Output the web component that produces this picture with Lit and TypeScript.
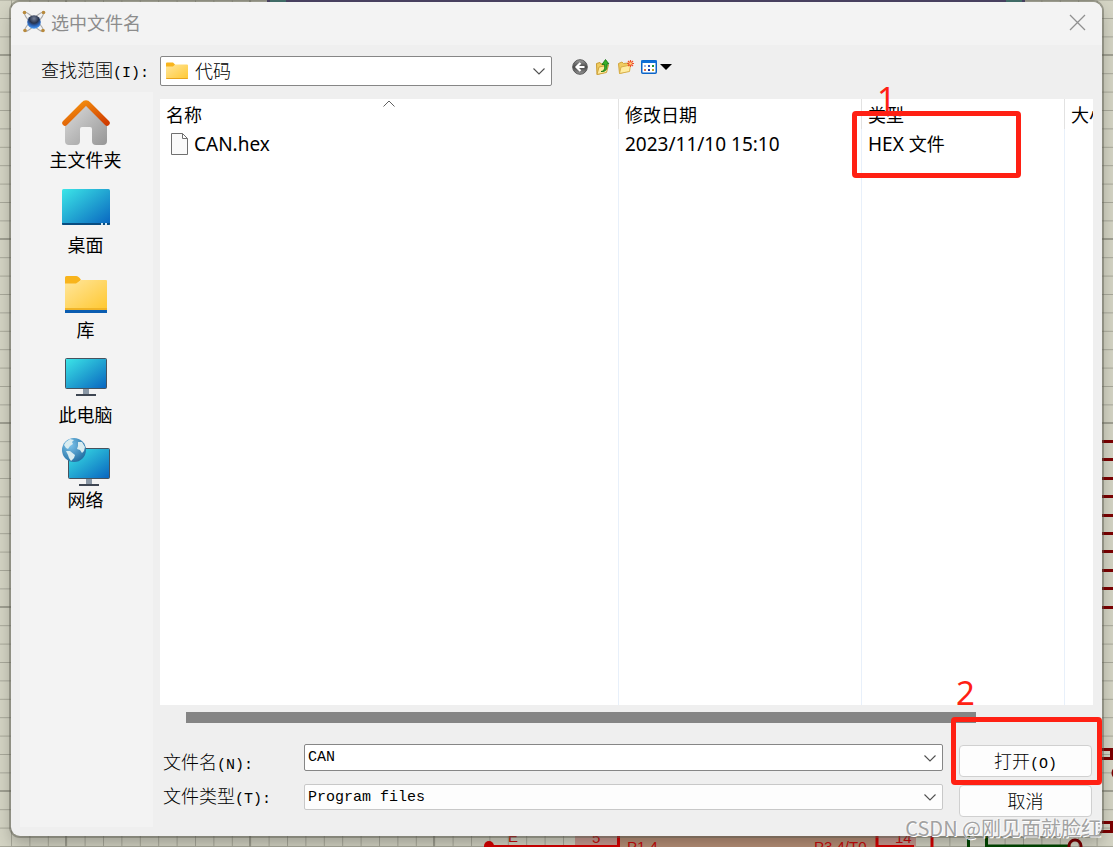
import { LitElement, html, css, svg } from "lit";
import { customElement, state } from "lit/decorators.js";

const CJK = css`"Noto Sans CJK SC", sans-serif`;

const range = (n: number) => Array.from({ length: n }, (_, i) => i);

/* Schematic sheet seen behind the dialog. */
@customElement("schematic-backdrop")
export class SchematicBackdrop extends LitElement {
  static styles = css`
    :host { display: block; }
    svg { display: block; width: 100%; height: 100%; }
    .net { font: 15px "Liberation Sans", sans-serif; fill: #c80a0a; }
  `;
  render() {
    return html`<svg aria-hidden="true">
      <defs>
        <pattern id="fine" width="18.4" height="18.4" x="11" y="18" patternUnits="userSpaceOnUse">
          <path d="M0 .5H18.4M.5 0V18.4" stroke="#a8a89a" stroke-width="1" />
        </pattern>
        <pattern id="bold" width="184" height="184" x="65" y="54" patternUnits="userSpaceOnUse">
          <path d="M0 1H184M1 0V184" stroke="#a0a092" stroke-width="2" />
        </pattern>
      </defs>
      <rect width="100%" height="100%" fill="#d4d4c4" />
      <rect width="100%" height="100%" fill="url(#fine)" />
      <rect width="100%" height="100%" fill="url(#bold)" />
      <rect x="267" y="0" width="758" height="2" fill="#3a2c70" />
      <rect x="270" y="0" width="16" height="2" fill="#2c7c7c" />
      <rect x="1006" y="0" width="16" height="2" fill="#2c7c7c" />
      ${range(10).map((i) => svg`<rect x="1102" y=${Math.round(440 + i * 18.4)} width="12" height="3" fill="#7c0000" />`)}
      <g fill="none" stroke="#7c0000" stroke-width="3">
        <path d="M1100 749.500H1111.500V758.500H1100M1100 822.500H1111.500V831.500H1100" />
        <circle cx="1118" cy="773" r="5" />
      </g>
      <rect x="575" y="830" width="43" height="17" fill="#c89c92" />
      <rect x="620" y="830" width="256" height="17" fill="#b89078" />
      <rect x="878" y="830" width="38" height="17" fill="#c89c92" />
      <path d="M489 846.500H618.500V830M877 830V846.500H914M932 830V847" fill="none" stroke="#d80000" stroke-width="3" />
      <circle cx="489" cy="846" r="5" fill="#d80000" />
      <path d="M968.500 830V847M986.500 830V846H1070" fill="none" stroke="#004800" stroke-width="3" />
      <circle cx="1075" cy="846" r="6" fill="none" stroke="#7c0000" stroke-width="3" />
      <text class="net" x="508" y="842">E</text>
      <text class="net" x="592" y="843">5</text>
      <text class="net" x="627" y="852">P1.4</text>
      <text class="net" x="814" y="852">P3.4/T0</text>
      <text class="net" x="895" y="843">14</text>
    </svg>`;
  }
}

const screen = svg`
  <linearGradient id="scr" x1="0" y1="0" x2="1" y2="1">
    <stop offset="0" stop-color="#3ce6e8" /><stop offset=".5" stop-color="#22a5d2" /><stop offset="1" stop-color="#0864c0" />
  </linearGradient>`;

const folderFill = svg`
  <linearGradient id="fold" x1="0" y1="0" x2="1" y2="1">
    <stop offset="0" stop-color="#ffe69c" /><stop offset="1" stop-color="#ffc832" />
  </linearGradient>`;

const placeIcons: Record<string, unknown> = {
  home: html`<svg width="48" height="48" viewBox="0 0 48 48">
    <defs>
      <linearGradient id="wall" x1="0" y1="0" x2="1" y2="1"><stop offset="0" stop-color="#dedede" /><stop offset="1" stop-color="#969696" /></linearGradient>
      <linearGradient id="roof" x1="0" y1="0" x2="1" y2="1"><stop offset="0" stop-color="#f89a10" /><stop offset="1" stop-color="#d03c00" /></linearGradient>
    </defs>
    <path d="M3 24 24 5 45 24V43a4 4 0 0 1-4 4H34a4 4 0 0 1-4-4V31a2 2 0 0 0-2-2H20a2 2 0 0 0-2 2V43a4 4 0 0 1-4 4H7a4 4 0 0 1-4-4Z" fill="url(#wall)" />
    <path d="M3 25 21.500 6.500Q24 3.500 26.500 6.500L45 25" fill="none" stroke="url(#roof)" stroke-width="5.500" stroke-linecap="round" stroke-linejoin="round" />
  </svg>`,
  desktop: html`<svg width="48" height="48" viewBox="0 0 48 48">
    <defs>${screen}</defs>
    <rect x="0" y="6" width="48" height="36" rx="1.500" fill="url(#scr)" />
    <path d="M0 40H48V41a1 1 0 0 1-1 1H1a1 1 0 0 1-1-1Z" fill="#084c80" />
    <path d="M39 40h2v2h-2zM43 40h2v2h-2z" fill="#cfe6f4" />
  </svg>`,
  library: html`<svg width="48" height="48" viewBox="0 0 48 48">
    <defs>${folderFill}</defs>
    <path d="M3 9.500A1.500 1.500 0 0 1 4.500 8H14c2 0 3 1 5 4L15 16H3Z" fill="#f8b41c" />
    <path d="M3 15.500H14L19 12H44a1 1 0 0 1 1 1V41H3Z" fill="url(#fold)" />
    <path d="M3 40H45V42H3Z" fill="#f0b428" />
    <path d="M3 42H45V45H3Z" fill="#0a5cb0" />
  </svg>`,
  pc: html`<svg width="48" height="48" viewBox="0 0 48 48">
    <defs>${screen}</defs>
    <path d="M21 36H27V42H21Z" fill="#8a97a5" />
    <rect x="14" y="41" width="20" height="2" fill="#3e4652" />
    <rect x="3.500" y="5.500" width="41" height="30" rx="1" fill="url(#scr)" stroke="#46525e" />
  </svg>`,
  network: html`<svg width="48" height="48" viewBox="0 0 48 48">
    <defs>${screen}
      <radialGradient id="sea" cx=".35" cy=".3" r=".8"><stop offset="0" stop-color="#7cc4ec" /><stop offset="1" stop-color="#1c689c" /></radialGradient>
    </defs>
    <path d="M24 40H30V46H24Z" fill="#8a97a5" />
    <rect x="17" y="46" width="20" height="2" fill="#3e4652" />
    <rect x="6.500" y="10.500" width="41" height="30" rx="1" fill="url(#scr)" stroke="#46525e" />
    <circle cx="12" cy="12" r="12" fill="url(#sea)" />
    <path d="M2 7Q4 3 8 1L12 2 10 4 11 6 8 8 6 11 4 10ZM4 13 8 13 13 17 12 20 9 23 7 20 6 17ZM16 4 20 4 23 9 22 13 20 15 18 12 15 11 16 8Z" fill="#d8ecf0" />
  </svg>`,
};

const places = [
  { icon: "home", label: "主文件夹" },
  { icon: "desktop", label: "桌面" },
  { icon: "library", label: "库" },
  { icon: "pc", label: "此电脑" },
  { icon: "network", label: "网络" },
];

@customElement("place-list")
export class PlaceList extends LitElement {
  static styles = css`
    :host { display: block; background: #f3f3f3; }
    nav { display: flex; flex-direction: column; gap: 11px; padding: 6px 2px 0 0; }
    button {
      display: flex; flex-direction: column; align-items: center;
      border: 0; padding: 0; background: none; color: #000;
      font: 18px/26px ${CJK};
    }
    svg { display: block; }
  `;
  render() {
    return html`<nav aria-label="位置">
      ${places.map((p) => html`<button type="button">${placeIcons[p.icon]}<span>${p.label}</span></button>`)}
    </nav>`;
  }
}

const chevron = html`<svg class="chevron" width="14" height="14" viewBox="0 0 14 14" aria-hidden="true">
  <path d="M1.500 4.500 7 10 12.500 4.500" fill="none" stroke="#505050" stroke-width="1.100" />
</svg>`;

@customElement("app-root")
export class AppRoot extends LitElement {
  @state() private fileName = "CAN";

  static styles = css`
    * { box-sizing: border-box; }
    :host {
      position: relative; display: flex; min-height: 100vh; overflow: hidden;
      padding: 2px 11px 11px; box-sizing: border-box;
      font: 300 18px/28px ${CJK}; color: #000;
    }
    schematic-backdrop { position: absolute; inset: 0; }
    .dialog {
      position: relative; flex: 1; min-width: 0; display: flex; flex-direction: column;
      background: #efefef; border-radius: 9px;
      box-shadow: 0 0 0 2px rgba(90, 90, 80, .45), 0 8px 16px rgba(0, 0, 0, .25);
    }
    .titlebar {
      display: flex; align-items: center; gap: 5px; height: 43px; padding: 0 16px 3px 11px;
      background: #f3f3f3; border-radius: 9px 9px 0 0;
    }
    h1 { flex: 1; margin: 0; font-size: 18px; line-height: 26px; font-weight: 400; color: #8c8c8c; }
    button { font: inherit; color: inherit; }
    .plain { display: block; border: 0; padding: 0; background: none; }
    .plain svg, .titlebar svg { display: block; }
    .toolbar { display: flex; align-items: center; padding: 11px 9px 6px 30px; }
    .toolbar > label { width: 119px; line-height: 26px; padding-bottom: 4px; }
    .mono { font-family: "Liberation Mono", monospace; font-size: 15px; line-height: 1; }
    .combo { display: grid; align-items: center; }
    .combo > * { grid-area: 1 / 1; }
    .lookin { flex: 0 1 392px; height: 30px; }
    .combo select, .combo input {
      appearance: none; width: 100%; height: 100%; min-width: 0; margin: 0; border-radius: 2px;
      border: 1px solid #868686; background: #fff; color: #000; outline: 0;
      font: 15px "Liberation Mono", monospace; padding: 0 30px 0 3px;
    }
    .lookin select { font: 300 18px ${CJK}; padding: 0 30px 2px 34px; }
    .combo .folder { z-index: 1; margin-left: 6px; pointer-events: none; }
    .chevron { z-index: 1; justify-self: end; margin-right: 6px; pointer-events: none; }
    .tools { display: flex; align-items: center; gap: 7px; margin: 0 0 8px 20px; }
    .view { display: flex; align-items: center; gap: 3px; }
    .main { flex: 1; display: flex; gap: 7px; padding: 0 9px 9px; }
    place-list { flex: 0 0 133px; }
    .content { flex: 1; min-width: 0; display: flex; flex-direction: column; padding-top: 7px; }
    .files { flex: 1; display: grid; background: #fff; }
    table { width: 100%; height: 100%; table-layout: fixed; border-collapse: separate; border-spacing: 0; }
    .date { width: 243px; } .type { width: 203px; } .size { width: 28px; }
    th, td {
      padding: 0 0 0 6px; text-align: left; font-weight: 400; white-space: nowrap;
      border-right: 1px solid #e8f0fa;
    }
    th { position: relative; height: 30px; border-color: #e2e2e2; }
    td { height: 28px; }
    .rest td { height: auto; }
    th:last-child, td:last-child { border-right: 0; overflow: hidden; }
    .latin { font-family: "Noto Sans", sans-serif; font-size: 19px; font-weight: 400; }
    .file { display: flex; align-items: center; gap: 6px; padding-left: 5px; }
    .sort { position: absolute; left: 50%; top: 1px; margin-left: -6px; }
    .track { padding: 7px 117px 7px 26px; }
    .thumb { height: 11px; background: #858585; }
    form { display: flex; gap: 16px; padding: 14px 1px 10px 3px; }
    .labels { width: 125px; display: flex; flex-direction: column; line-height: 34px; }
    .fields { flex: 1; min-width: 0; display: flex; flex-direction: column; gap: 13px; }
    .fields .combo { height: 27px; }
    .fields .combo.soft { height: 26px; }
    .soft select { border-color: #c8c8c8; background: #fdfdfd; }
    .actions { position: relative; width: 133px; display: flex; flex-direction: column; gap: 8px; padding-top: 1px; }
    .actions > button {
      height: 32px; padding: 0 0 2px; border: 1px solid #d0d0d0; border-radius: 4px; background: #fdfdfd; line-height: 28px;
    }
    .mark { position: absolute; z-index: 2; border: 5px solid #ff2013; border-radius: 4px; pointer-events: none; }
    .mark b {
      position: absolute; font: 33px/40px "Noto Sans", sans-serif; color: #ff2013;
    }
    .mark.one { left: -10px; top: 12px; width: 169px; height: 67px; }
    .mark.one b { left: 20px; top: -37px; }
    .mark.two { left: -8px; right: -10px; top: -27px; height: 68px; }
    .mark.two b { left: 0; top: -49px; }
    .watermark {
      position: absolute; right: 12px; bottom: 5px; font-size: 20px; line-height: 28px; font-weight: 400;
      color: #a2a2a2; text-shadow: 1px 1px 0 #fff, -1px -1px 0 rgba(255, 255, 255, .4);
    }
    .grip { position: absolute; right: 1px; bottom: 1px; }
  `;

  private onName(e: Event) {
    this.fileName = (e.target as HTMLInputElement).value;
  }

  render() {
    return html`
      <schematic-backdrop></schematic-backdrop>
      <section class="dialog" role="dialog" aria-labelledby="title">
        <header class="titlebar">
          <svg width="24" height="24" viewBox="0 0 24 24" aria-hidden="true">
            <defs><radialGradient id="ball" cx=".5" cy=".25" r=".75">
              <stop offset="0" stop-color="#76829a" /><stop offset=".45" stop-color="#28344e" /><stop offset=".7" stop-color="#2c62b4" /><stop offset="1" stop-color="#4ca0f8" />
            </radialGradient></defs>
            <g fill="none" stroke="#a8a8a8" stroke-width="1">
              <ellipse cx="12" cy="12" rx="13" ry="2.800" transform="rotate(45 12 12)" />
              <ellipse cx="12" cy="12" rx="13" ry="2.800" transform="rotate(-45 12 12)" />
            </g>
            <circle cx="12" cy="12" r="6.800" fill="url(#ball)" />
            <g fill="#b88a3c"><circle cx="2.500" cy="2.500" r="1.800" /><circle cx="21.500" cy="2.500" r="1.800" /><circle cx="3" cy="20.500" r="1.800" /><circle cx="21" cy="20.500" r="1.800" /></g>
          </svg>
          <h1 id="title">选中文件名</h1>
          <button class="plain" type="button" aria-label="关闭">
            <svg width="17" height="17" viewBox="0 0 17 17"><path d="M1 1 16 16M16 1 1 16" stroke="#909090" stroke-width="1.300" /></svg>
          </button>
        </header>

        <div class="toolbar">
          <label for="lookin">查找范围<span class="mono">(I):</span></label>
          <div class="combo lookin">
            <select id="lookin"><option>代码</option></select>
            <svg class="folder" width="23" height="18" viewBox="0 0 23 18" aria-hidden="true">
              <defs>${folderFill}</defs>
              <path d="M0 1.500A1 1 0 0 1 1 .500H7L9 2.500V5H0Z" fill="#f8b41c" />
              <path d="M0 4.500H7L9 2.500H21a1 1 0 0 1 1 1V16a1 1 0 0 1-1 1H1a1 1 0 0 1-1-1Z" fill="url(#fold)" />
              <path d="M0 16H22a1 1 0 0 1-1 1H1a1 1 0 0 1-1-1Z" fill="#e8a41c" />
            </svg>
            ${chevron}
          </div>
          <div class="tools">
            <button class="plain" type="button" aria-label="后退">
              <svg width="16" height="16" viewBox="0 0 16 16">
                <defs><linearGradient id="back" x1="0" y1="0" x2="0" y2="1"><stop offset="0" stop-color="#a0a0a0" /><stop offset=".5" stop-color="#484848" /><stop offset="1" stop-color="#989898" /></linearGradient></defs>
                <circle cx="8" cy="8" r="7.300" fill="url(#back)" stroke="#585858" />
                <path d="M8.500 4 4.500 8 8.500 12M5 8H12.500" fill="none" stroke="#fff" stroke-width="2.200" />
              </svg>
            </button>
            <button class="plain" type="button" aria-label="向上一级">
              <svg width="16" height="16" viewBox="0 0 16 16">
                <path d="M1.500 4.500 5 3.500 6 5 11 4.500V13L2 15.500Z" fill="#f0cc60" stroke="#c89a30" />
                <path d="M2 15.500 4 8 13.500 6 11.500 13.500Z" fill="#ffeca0" stroke="#d0a43c" />
                <path d="M6 12.500C9.500 12 10 9.500 9.500 5.500H7L10.500 .5 14 5H12C12.500 10 11 13 6 12.500Z" fill="#38b028" stroke="#107010" stroke-width=".8" />
              </svg>
            </button>
            <button class="plain" type="button" aria-label="新建文件夹">
              <svg width="16" height="16" viewBox="0 0 16 16">
                <path d="M.5 4.500 4 3 5.500 4.500 10.500 4V12L1.500 14.500Z" fill="#f0cc60" stroke="#d0a43c" />
                <path d="M1.500 14.500 3 8 12.500 6 11.500 12.500Z" fill="#ffeca0" stroke="#d8b04c" />
                <path d="M12.500 1V8M9 4.500H16M10 2 15 7M15 2 10 7" stroke="#f05028" stroke-width="1.200" />
                <circle cx="12.500" cy="4.500" r="1.300" fill="#ffd080" />
              </svg>
            </button>
            <button class="plain view" type="button" aria-label="查看菜单">
              <svg width="16" height="16" viewBox="0 0 16 16">
                <rect x=".750" y="1.750" width="14.500" height="12.500" rx="1" fill="#fff" stroke="#0a64c8" stroke-width="1.500" />
                <path d="M0 1.500H16V4H0Z" fill="#1070d8" />
                <path d="M3 6h2v2H3z" fill="#a8b4e0" /><path d="M7 6h2v2H7z" fill="#3058c0" /><path d="M11 6h2v2h-2z" fill="#209030" />
                <path d="M3 10h2v2H3z" fill="#e07048" /><path d="M7 10h2v2H7z" fill="#1838a0" /><path d="M11 10h2v2h-2z" fill="#c89c20" />
              </svg>
              <svg width="12" height="6" viewBox="0 0 12 6"><path d="M0 0H12L6 6Z" /></svg>
            </button>
          </div>
        </div>

        <div class="main">
          <place-list></place-list>
          <div class="content">
            <div class="files">
              <table>
                <colgroup><col /><col class="date" /><col class="type" /><col class="size" /></colgroup>
                <thead>
                  <tr>
                    <th>名称
                      <svg class="sort" width="12" height="8" viewBox="0 0 12 8" aria-hidden="true"><path d="M.5 6.500 6 1 11.500 6.500" fill="none" stroke="#606060" /></svg>
                    </th>
                    <th>修改日期</th>
                    <th>类型<div class="mark one"><b>1</b></div></th>
                    <th>大小</th>
                  </tr>
                </thead>
                <tbody>
                  <tr>
                    <td><div class="file">
                      <svg width="17" height="22" viewBox="0 0 17 22" aria-hidden="true"><path d="M.5.5H11.500L16.500 5.500V21.500H.5ZM11.500.5V5.500H16.500" fill="#fafafa" stroke="#707070" /></svg>
                      <span class="latin">CAN.hex</span></div></td>
                    <td class="latin">2023/11/10 15:10</td>
                    <td><span class="latin">HEX </span>文件</td>
                    <td></td>
                  </tr>
                  <tr class="rest"><td></td><td></td><td></td><td></td></tr>
                </tbody>
              </table>
            </div>
            <div class="track"><div class="thumb"></div></div>
            <form @submit=${(e: Event) => e.preventDefault()}>
              <div class="labels">
                <label for="name">文件名<span class="mono">(N):</span></label>
                <label for="kind">文件类型<span class="mono">(T):</span></label>
              </div>
              <div class="fields">
                <div class="combo">
                  <input id="name" type="text" autocomplete="off" .value=${this.fileName} @input=${this.onName} />
                  ${chevron}
                </div>
                <div class="combo soft">
                  <select id="kind"><option>Program files</option></select>
                  ${chevron}
                </div>
              </div>
              <div class="actions">
                <button type="submit">打开<span class="mono">(O)</span></button>
                <button type="button">取消</button>
                <div class="mark two"><b>2</b></div>
              </div>
            </form>
          </div>
        </div>
        <svg class="grip" width="10" height="12" viewBox="0 0 10 12" aria-hidden="true">
          <path d="M7 0h2v2H7zM7 4h2v2H7zM7 8h2v2H7zM3 4h2v2H3zM3 8h2v2H3z" fill="#b8b8b8" />
        </svg>
      </section>
      <div class="watermark">CSDN @刚见面就脸红</div>
    `;
  }
}
